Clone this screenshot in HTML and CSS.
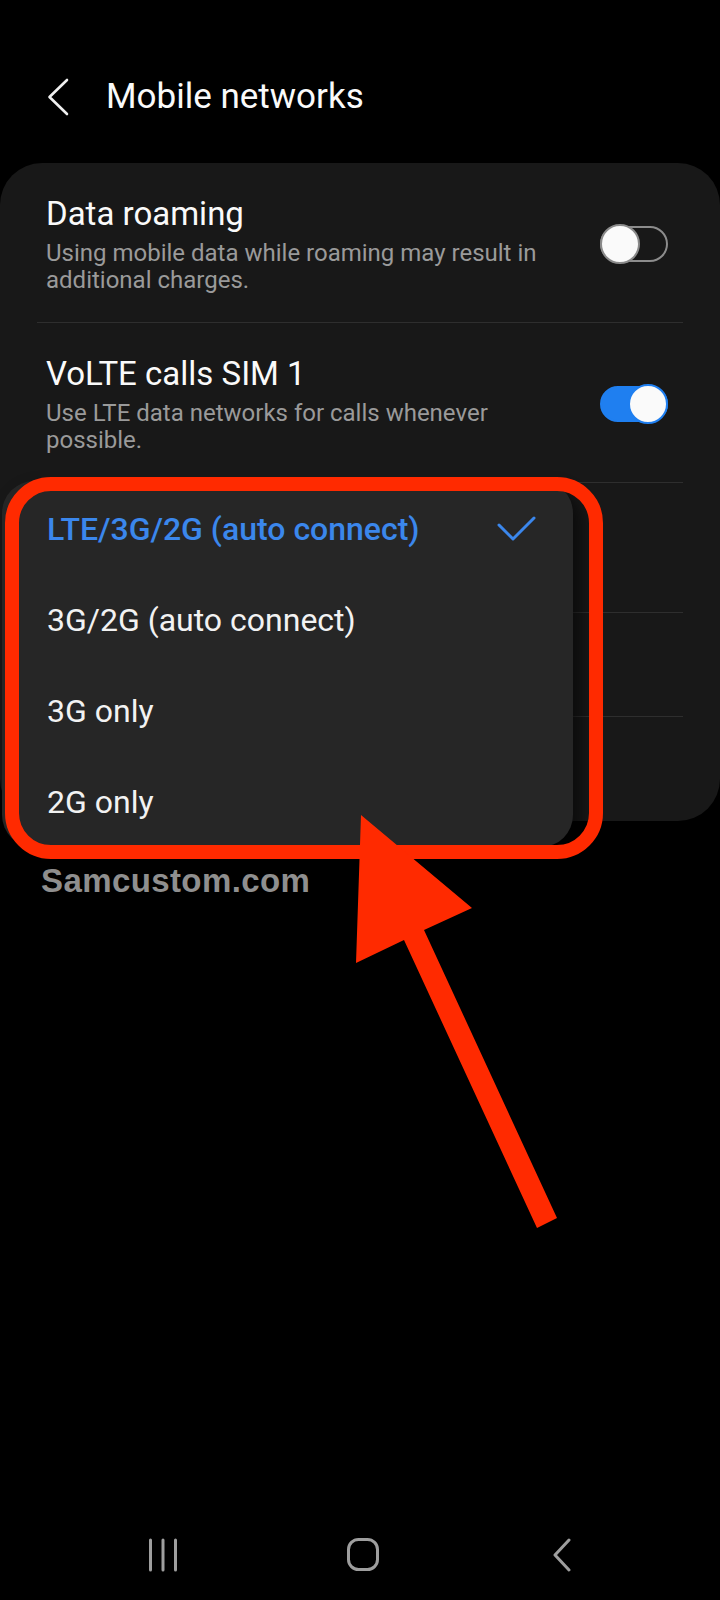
FILE: index.html
```html
<!DOCTYPE html>
<html lang="en">
<head>
  <meta charset="UTF-8" />
  <meta name="viewport" content="width=device-width, initial-scale=1.0" />
  <title>Mobile networks</title>
  <link rel="stylesheet" href="styles.css">
</head>
<body>
  <div class="screen">
    <header class="topbar">
      <svg class="back" width="24" height="38" viewBox="0 0 24 38">
        <polyline points="21,2 3.5,19 21,36" />
      </svg>
      <h1>Mobile networks</h1>
    </header>

    <section class="card">
      <div class="row">
        <div class="row-text">
          <div class="row-title">Data roaming</div>
          <div class="row-sub">Using mobile data while roaming may result in additional charges.</div>
        </div>
        <span class="switch"><span class="knob"></span></span>
      </div>
      <div class="divider"></div>
      <div class="row">
        <div class="row-text">
          <div class="row-title">VoLTE calls SIM 1</div>
          <div class="row-sub">Use LTE data networks for calls whenever possible.</div>
        </div>
        <span class="switch on"><span class="knob"></span></span>
      </div>
      <div class="divider"></div>
      <div class="row row-tall"></div>
      <div class="divider"></div>
      <div class="row row-short"></div>
      <div class="divider"></div>
      <div class="row row-short last"></div>
    </section>

    <p class="watermark">Samcustom.com</p>

    <nav class="navbar">
      <svg width="32" height="34" viewBox="0 0 32 34">
        <line x1="3.5" y1="2" x2="3.5" y2="32" />
        <line x1="16" y1="2" x2="16" y2="32" />
        <line x1="28.5" y1="2" x2="28.5" y2="32" />
      </svg>
      <svg width="36" height="36" viewBox="0 0 36 36">
        <rect x="3.5" y="2.5" width="29" height="30" rx="10" />
      </svg>
      <svg width="22" height="34" viewBox="0 0 22 34">
        <polyline points="17,2 3,17 17,32" />
      </svg>
    </nav>

    <div class="menu">
      <div class="menu-item selected">
        <span>LTE/3G/2G (auto connect)</span>
        <svg width="40" height="28" viewBox="0 0 40 28">
          <polyline points="2,10 16,24 37,3" />
        </svg>
      </div>
      <div class="menu-item">3G/2G (auto connect)</div>
      <div class="menu-item">3G only</div>
      <div class="menu-item">2G only</div>
    </div>

    <div class="highlight"></div>

    <svg class="arrow" width="230" height="440" viewBox="340 800 230 440">
      <polygon points="361,815 472,908 424,930 557,1218 537,1228 404,940 356,963" />
    </svg>
  </div>
</body>
</html>
```

FILE: styles.css
```css
* {
  margin: 0;
  padding: 0;
  box-sizing: border-box;
}

:root {
  --bg: #000;
  --card: #181818;
  --menu: #262626;
  --text: #fafafa;
  --muted: #9a9a9a;
  --line: #2e2e2e;
  --blue: #1f7ff0;
  --blue-text: #3b87ec;
  --mark: #ff2a00;
  --nav: #9e9e9e;
}

body {
  font-family: Roboto, "Noto Sans", sans-serif;
  background: var(--bg);
  color: var(--text);
}

.screen {
  position: relative;
  width: 720px;
  min-height: 1600px;
  display: flex;
  flex-direction: column;
}

.topbar {
  display: flex;
  align-items: center;
  gap: 36px;
  padding: 73px 0 42px 46px;
}

.back polyline {
  fill: none;
  stroke: #f0f0f0;
  stroke-width: 2.6;
  stroke-linecap: round;
  stroke-linejoin: round;
}

.topbar h1 {
  font-size: 35px;
  font-weight: 400;
  line-height: 48px;
}

.card {
  background: var(--card);
  border-radius: 42px;
}

.row {
  display: flex;
  align-items: center;
  gap: 34px;
  padding: 31px 52px 28px 46px;
}

.row-text {
  flex: 1;
}

.row-title {
  font-size: 33px;
  line-height: 40px;
}

.row-sub {
  margin-top: 6px;
  font-size: 24px;
  line-height: 27px;
  color: var(--muted);
}

.row-tall {
  height: 129px;
  padding: 0;
}

.row-short {
  height: 103px;
  padding: 0;
}

.row-short.last {
  height: 104px;
}

.divider {
  height: 1px;
  margin: 0 37px;
  background: var(--line);
}

.switch {
  position: relative;
  width: 68px;
  height: 36px;
  border: 2px solid #8c8c8c;
  border-radius: 18px;
}

.switch .knob {
  position: absolute;
  top: -4px;
  left: -2px;
  width: 40px;
  height: 40px;
  border-radius: 50%;
  background: #fafafa;
  border: 2px solid #8a8a8a;
}

.switch.on {
  background: var(--blue);
  border-color: var(--blue);
}

.switch.on .knob {
  left: 26px;
  border-color: var(--blue);
}

.watermark {
  margin: 40px 0 0 41px;
  font-family: "Liberation Sans", Arial, sans-serif;
  font-weight: 700;
  font-size: 33px;
  line-height: 40px;
  letter-spacing: 0.4px;
  color: #8f8f8f;
}

.navbar {
  margin-top: auto;
  height: 90px;
  display: grid;
  grid-template-columns: repeat(3, 200px);
  align-items: center;
  justify-items: center;
  padding-left: 63px;
}

.navbar line,
.navbar rect,
.navbar polyline {
  fill: none;
  stroke: var(--nav);
  stroke-width: 3;
  stroke-linecap: round;
  stroke-linejoin: round;
}

/* network mode popup */
.menu {
  position: absolute;
  left: 2px;
  top: 481px;
  width: 571px;
  padding-top: 2px;
  background: var(--menu);
  border-radius: 32px;
  box-shadow: 8px 8px 16px rgba(0, 0, 0, 0.55);
}

.menu-item {
  height: 91px;
  display: flex;
  align-items: center;
  justify-content: space-between;
  padding: 0 36px 0 45px;
  font-size: 32px;
  color: #f2f2f2;
}

.menu-item.selected {
  color: var(--blue-text);
  font-weight: 500;
}

.menu-item polyline {
  fill: none;
  stroke: var(--blue-text);
  stroke-width: 3;
  stroke-linecap: round;
  stroke-linejoin: round;
}

/* annotation */
.highlight {
  position: absolute;
  left: 5px;
  top: 477px;
  width: 598px;
  height: 382px;
  border: 14px solid var(--mark);
  border-radius: 46px;
}

.arrow {
  position: absolute;
  left: 340px;
  top: 800px;
}

.arrow polygon {
  fill: var(--mark);
}
```
